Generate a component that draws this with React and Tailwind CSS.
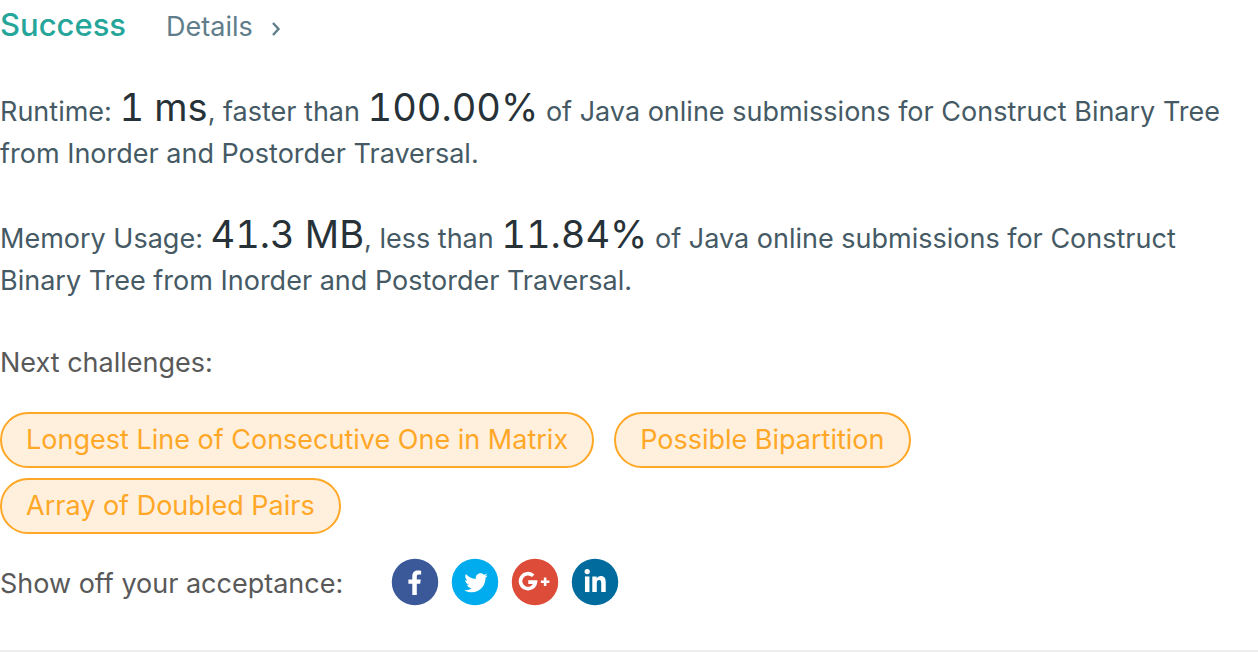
import React from "react";

const networks = [
  {
    name: "Facebook",
    bg: "#3b5998",
    glyph: (
      <path
        fill="white"
        d="M34.4 49.2V34.4h4.5l.8-5.8h-5.3v-3.7c0-1.7.5-2.8 2.9-2.8h2.9v-5.2c-.5-.1-2.4-.3-4.4-.3-4.4 0-7.4 2.7-7.4 7.6v4.4h-5.2v5.8h5.2v14.8z"
      />
    ),
  },
  {
    name: "Twitter",
    bg: "#00aced",
    glyph: (
      <path
        fill="white"
        transform="translate(2 1.6) scale(0.98)"
        d="M48,22.1c-1.2,0.5-2.4,0.9-3.8,1c1.4-0.8,2.4-2.1,2.9-3.6c-1.3,0.8-2.7,1.3-4.2,1.6 C41.7,19.8,40,19,38.2,19c-3.6,0-6.6,2.9-6.6,6.6c0,0.5,0.1,1,0.2,1.5c-5.5-0.3-10.3-2.9-13.5-6.9c-0.6,1-0.9,2.1-0.9,3.3 c0,2.3,1.2,4.3,2.9,5.5c-1.1,0-2.1-0.3-3-0.8c0,0,0,0.1,0,0.1c0,3.2,2.3,5.8,5.3,6.4c-0.6,0.1-1.1,0.2-1.7,0.2c-0.4,0-0.8,0-1.2-0.1 c0.8,2.6,3.3,4.5,6.1,4.6c-2.2,1.8-5.1,2.8-8.2,2.8c-0.5,0-1.1,0-1.6-0.1c2.9,1.9,6.4,2.9,10.1,2.9c12.1,0,18.7-10,18.7-18.7 c0-0.3,0-0.6,0-0.8C46,24.5,47.1,23.4,48,22.1z"
      />
    ),
  },
  {
    name: "Google Plus",
    bg: "#dd4b39",
    glyph: (
      <g fill="none" stroke="white">
        <path strokeWidth="4.8" d="M29.6 23.6A10 10 0 1 0 32.6 32.2H23" />
        <path strokeWidth="3.4" d="M39.8 31.6h11.4M45.5 25.9v11.4" />
      </g>
    ),
  },
  {
    name: "LinkedIn",
    bg: "#006b9c",
    glyph: (
      <g fill="white">
        <circle cx="21.6" cy="18" r="3.5" />
        <path d="M18.6 24.6h6V45.4h-6z" />
        <path d="M28.4 45.4V24.6h5.8v2.8c.9-1.8 2.9-3.3 5.7-3.3 4.6 0 6.4 3 6.4 8.6v12.7h-6V34c0-2.9-.5-4.8-2.8-4.8-2.4 0-3.1 1.9-3.1 4.8v11.4z" />
      </g>
    ),
  },
];

const challenges = [
  "Longest Line of Consecutive One in Matrix",
  "Possible Bipartition",
  "Array of Doubled Pairs",
];

function Stat({ children }) {
  return <span className="text-[38px] leading-none tabular-nums text-[#263238]">{children}</span>;
}

export default function App() {
  return (
    <main className="bg-white font-['Inter',sans-serif] text-[27px] leading-[42px] text-[#455a64]">
      <header className="flex items-baseline gap-10 pt-1">
        <h1 className="text-[31px] font-medium text-[#26a69a]">Success</h1>
        <a href="#details" className="flex items-center gap-4 text-[27px] text-[#607d8b]">
          Details
          <svg viewBox="0 0 12 16" className="mt-1 h-4 w-3" fill="none" stroke="currentColor" strokeWidth="2.4" aria-hidden="true">
            <path d="M4 2l5.5 6-5.5 6" />
          </svg>
        </a>
      </header>
      <p className="mt-10">
        Runtime: <Stat>1 ms</Stat>, faster than <Stat>100.00%</Stat> of Java online submissions for Construct Binary Tree from Inorder and Postorder Traversal.
      </p>
      <p className="mt-10">
        Memory Usage: <Stat>41.3 MB</Stat>, less than <Stat>11.84%</Stat> of Java online submissions for Construct Binary Tree from Inorder and Postorder Traversal.
      </p>
      <h2 className="mt-10 text-[#595959]">Next challenges:</h2>
      <nav className="mt-7 flex flex-wrap gap-x-5 gap-y-2.5">
        {challenges.map((name) => (
          <a key={name} href="#challenge" className="flex h-14 items-center rounded-full border-2 border-[#ffa726] bg-[#fff0de] px-6 text-[#ffa726]">
            {name}
          </a>
        ))}
      </nav>
      <section className="mt-6 flex items-center gap-12 border-b-2 border-[#eeeeee] pb-11 text-[#595959]">
        <span className="pt-1">Show off your acceptance:</span>
        <div className="flex gap-3">
          {networks.map(({ name, bg, glyph }) => (
            <button key={name} type="button" aria-label={name} className="size-12">
              <svg viewBox="0 0 64 64" className="size-12" aria-hidden="true">
                <circle cx="32" cy="32" r="31" fill={bg} />
                {glyph}
              </svg>
            </button>
          ))}
        </div>
      </section>
    </main>
  );
}
